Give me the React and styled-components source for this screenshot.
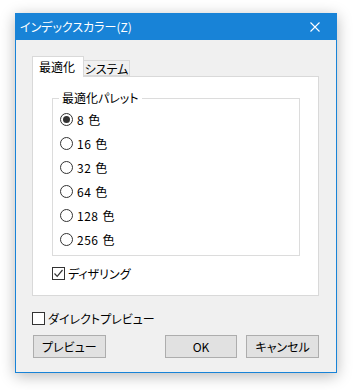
import styled, { createGlobalStyle } from "styled-components";

const GlobalStyle = createGlobalStyle`
  html, body {
    margin: 0;
    padding: 0;
    background: #ffffff;
  }
  body {
    font-family: "Noto Sans CJK JP", "Noto Sans", sans-serif;
    font-size: 12px;
    font-feature-settings: "palt";
    color: #000;
  }
`;

const Page = styled.div`
  width: 354px;
  height: 390px;
  padding: 13px 0 0 15px;
  box-sizing: border-box;
`;

const Window = styled.div`
  width: 322px;
  height: 360px;
  box-sizing: border-box;
  border: 1px solid #1883d7;
  border-top: none;
  background: #f0f0f0;
  box-shadow: 0 3px 14px rgba(0, 0, 0, 0.28);
  display: flex;
  flex-direction: column;
`;

const TitleBar = styled.div`
  height: 27px;
  background: #1883d7;
  margin: 0 -1px;
  padding: 0 0 0 5px;
  display: flex;
  align-items: center;
  justify-content: space-between;
  color: #fff;
  font-size: 12px;
`;

const CloseButton = styled.div`
  width: 46px;
  height: 27px;
  display: flex;
  align-items: center;
  justify-content: center;
  margin-right: -1px;
`;

const Body = styled.div`
  flex: 1;
  padding: 16px 17px 14px 16px;
  display: flex;
  flex-direction: column;
`;

const TabStrip = styled.div`
  display: flex;
  align-items: flex-end;
  height: 20px;
`;

const Tab = styled.div`
  box-sizing: border-box;
  width: ${p => (p.active ? "52px" : "47px")};
  height: ${p => (p.active ? "21px" : "16px")};
  margin-bottom: ${p => (p.active ? "-1px" : "0")};
  margin-left: ${p => (p.active ? "0" : "-1px")};
  border: 1px solid #d9d9d9;
  border-bottom: ${p => (p.active ? "none" : "1px solid #d9d9d9")};
  background: ${p => (p.active ? "#fff" : "#f0f0f0")};
  position: relative;
  z-index: ${p => (p.active ? 1 : 0)};
  display: flex;
  align-items: center;
  justify-content: ${p => (p.active ? "flex-start" : "center")};
  padding-left: ${p => (p.active ? "6px" : "0")};
  padding-bottom: ${p => (p.active ? "1px" : "0")};
  font-size: 12px;
`;

const TabPanel = styled.div`
  box-sizing: border-box;
  width: 287px;
  height: 220px;
  background: #fff;
  border: 1px solid #d9d9d9;
  padding: 13px 18px 0 19px;
  display: flex;
  flex-direction: column;
`;

const GroupBox = styled.fieldset`
  margin: 0;
  min-width: 0;
  border: 1px solid #dcdcdc;
  padding: 1px 6px 4px 6px;
`;

const Legend = styled.legend`
  padding: 0 3px;
  line-height: 16px;
  font-size: 12px;
`;

const OptionRow = styled.label`
  height: ${p => (p.tall ? "24px" : "20px")};
  display: flex;
  align-items: center;
  gap: ${p => (p.gap || 4)}px;
  font-size: 12px;
  margin-top: ${p => p.offset || 0}px;
`;

const Radio = styled.span`
  box-sizing: border-box;
  width: 13px;
  height: 13px;
  border-radius: 50%;
  border: 1px solid #333;
  background: #fff;
  display: flex;
  align-items: center;
  justify-content: center;
  margin-left: 1px;
  &::after {
    content: "";
    width: 7px;
    height: 7px;
    border-radius: 50%;
    background: ${p => (p.checked ? "#333" : "transparent")};
  }
`;

const Box = styled.span`
  box-sizing: border-box;
  width: 13px;
  height: 13px;
  border: 1px solid #333;
  background: #fff;
  display: flex;
  align-items: center;
  justify-content: center;
`;

const Footer = styled.div`
  display: flex;
  flex-direction: column;
`;

const ButtonRow = styled.div`
  display: flex;
  margin-top: 7px;
  padding-left: 1px;
`;

const Button = styled.div`
  box-sizing: border-box;
  width: 73px;
  height: 23px;
  border: 1px solid #adadad;
  background: #e1e1e1;
  display: flex;
  align-items: center;
  justify-content: center;
  font-size: 12px;
  margin-left: ${p => p.gap || 0}px;
`;

const Count = styled.span`
  letter-spacing: 0.5px;
  margin-right: 4px;
`;

const colors = ["8", "16", "32", "64", "128", "256"];

const Check = () => (
  <svg width="11" height="11" viewBox="0 0 11 11">
    <path d="M1.5 5.5 L4.2 8.3 L9.5 2" fill="none" stroke="#333" strokeWidth="1.2" />
  </svg>
);

export default function App() {
  return (
    <Page>
      <GlobalStyle />
      <Window>
        <TitleBar>
          <span>インデックスカラー(Z)</span>
          <CloseButton>
            <svg width="10" height="10" viewBox="0 0 10 10">
              <path d="M0.5 0.5 L9.5 9.5 M9.5 0.5 L0.5 9.5" stroke="#fff" strokeWidth="1.1" />
            </svg>
          </CloseButton>
        </TitleBar>
        <Body>
          <TabStrip>
            <Tab active>最適化</Tab>
            <Tab>システム</Tab>
          </TabStrip>
          <TabPanel>
            <GroupBox>
              <Legend>最適化パレット</Legend>
              {colors.map((c, i) => (
                <OptionRow key={c} tall>
                  <Radio checked={i === 0} />
                  <span>
                    <Count>{c}</Count>色
                  </span>
                </OptionRow>
              ))}
            </GroupBox>
            <OptionRow offset={7} gap={3}>
              <Box>
                <Check />
              </Box>
              ディザリング
            </OptionRow>
          </TabPanel>
          <Footer>
            <OptionRow offset={12} gap={3}>
              <Box />
              ダイレクトプレビュー
            </OptionRow>
            <ButtonRow>
              <Button>プレビュー</Button>
              <Button gap={59}>OK</Button>
              <Button gap={9}>キャンセル</Button>
            </ButtonRow>
          </Footer>
        </Body>
      </Window>
    </Page>
  );
}
